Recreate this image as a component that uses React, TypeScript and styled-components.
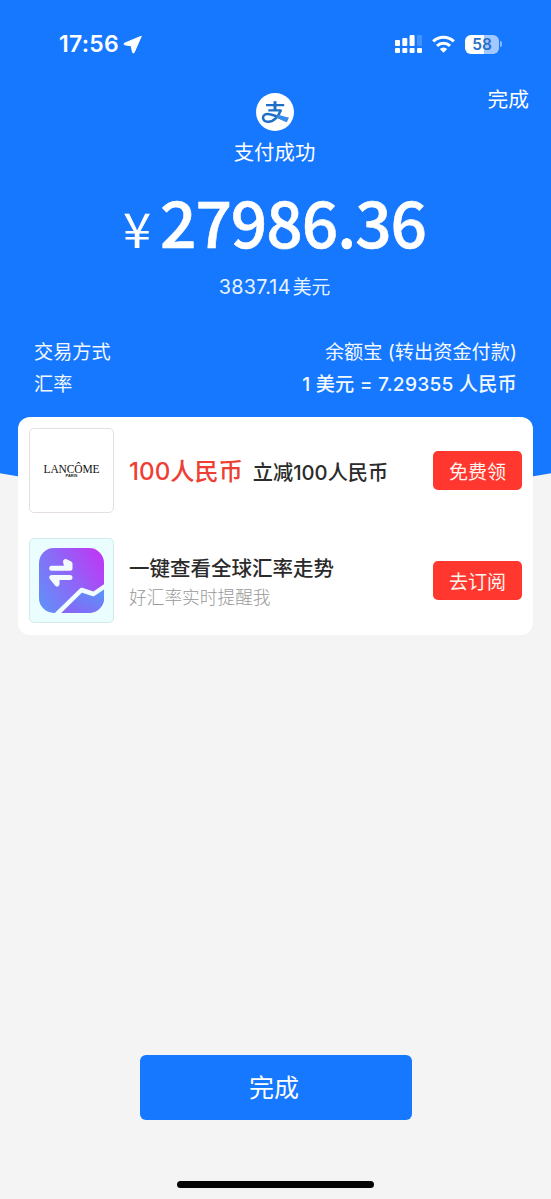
import React from 'react';
import styled, { createGlobalStyle } from 'styled-components';

const BLUE = '#1677ff';

const GlobalStyle = createGlobalStyle`
  * { box-sizing: border-box; }
  body {
    margin: 0;
    background: #f4f4f4;
    font-family: Inter, 'Noto Sans CJK SC', sans-serif;
  }
`;

const Page = styled.main`
  position: relative;
  display: flex;
  flex-direction: column;
  width: 551px;
  height: 1199px;
  overflow: hidden;
  background: #f4f4f4;

  &::before {
    content: '';
    position: absolute;
    top: 0;
    left: -30%;
    width: 160%;
    height: 495px;
    border-radius: 0 0 50% 50% / 0 0 99px 99px;
    background: ${BLUE};
  }

  > * { position: relative; }
`;

const StatusBar = styled.div`
  display: flex;
  align-items: center;
  justify-content: space-between;
  height: 88px;
  padding: 0 49px 0 59px;
  color: #fff;
`;

const Clock = styled.div`
  display: flex;
  align-items: center;
  gap: 4px;
  font-size: 23px;
  font-weight: 600;
  letter-spacing: 0.25px;
`;

const StatusIcons = styled.div`
  display: flex;
  align-items: center;
`;

const Battery = styled.div`
  display: flex;
  align-items: center;
  gap: 1px;
  margin-left: 10px;

  &::after {
    content: '';
    width: 2px;
    height: 6px;
    border-radius: 0 2px 2px 0;
    background: #8abbff;
  }
`;

const BatteryLevel = styled.div`
  width: 34px;
  height: 19px;
  border-radius: 6px;
  background: linear-gradient(90deg, #fff 57%, #a2c8ff 57%);
  color: #2870c8;
  font-size: 15.5px;
  font-weight: 600;
  line-height: 19px;
  text-align: center;
`;

const Summary = styled.header`
  display: grid;
  grid-template-columns: 1fr auto 1fr;
  height: 80px;
  padding: 0 22px;
  color: #fff;
`;

const DoneLink = styled.a`
  justify-self: end;
  margin-top: -3px;
  font-size: 20.7px;
  line-height: 30px;
`;

const Result = styled.div`
  grid-column: 2;
  display: flex;
  flex-direction: column;
  align-items: center;
  margin-left: -2px;
  padding-top: 5px;
  font-size: 20.4px;
  line-height: 30px;

  svg { margin-bottom: 7px; }
`;

const Amount = styled.div`
  display: flex;
  align-items: baseline;
  height: 107px;
  padding-left: 123px;
  color: #fff;
  font-family: 'Noto Sans CJK SC', sans-serif;
  white-space: nowrap;
`;

const Currency = styled.span`
  width: 37px;
  font-size: 48px;
  line-height: 104px;
  transform: scaleX(1.06);
  transform-origin: left;
`;

const Figure = styled.span`
  font-size: 64px;
  font-weight: 500;
  letter-spacing: -1.05px;
  line-height: 104px;
  -webkit-text-stroke: 0.6px #fff;
`;

const Foreign = styled.div`
  display: flex;
  justify-content: center;
  align-items: baseline;
  gap: 2px;
  height: 61px;
  padding-right: 2px;
  color: #e6f4ff;
  font-size: 18.8px;
  line-height: 24px;

  span:first-child { font-size: 19.8px; letter-spacing: 0.25px; }
`;

const Details = styled.dl`
  height: 81px;
  margin: 0;
  padding: 0 34px;
  color: #f2f9ff;
  font-size: 19.2px;
`;

const Detail = styled.div<{ $strong?: boolean }>`
  display: flex;
  justify-content: space-between;
  height: 32px;
  line-height: 32px;

  dt, dd { margin: 0; white-space: nowrap; }
  dd { font-weight: ${(p) => (p.$strong ? 500 : 400)}; letter-spacing: ${(p) => (p.$strong ? '0.2px' : '0')}; }
`;

const Offers = styled.section`
  display: flex;
  flex-direction: column;
  gap: 25px;
  height: 218px;
  margin: 0 18px;
  padding: 11px 11px 0;
  border-radius: 12px;
  background: #fff;
`;

const Offer = styled.article`
  display: flex;
  align-items: center;
  height: 85px;
`;

const Thumb = styled.div<{ $tint?: boolean }>`
  display: flex;
  flex-direction: column;
  align-items: center;
  justify-content: center;
  width: 85px;
  height: 85px;
  margin-right: 15px;
  border: 1px solid ${(p) => (p.$tint ? '#d3e9ea' : '#e6dfe2')};
  border-radius: 5px;
  background: ${(p) => (p.$tint ? '#eafdff' : '#fff')};
`;

const Brand = styled.div`
  padding-top: 2px;
  color: #111;
  font-family: 'Liberation Serif', serif;
  font-size: 11.5px;
  letter-spacing: -0.12px;
  line-height: 9px;
`;

const BrandCity = styled.div`
  color: #222;
  font-family: 'Liberation Sans', sans-serif;
  font-size: 4px;
  font-weight: 700;
  line-height: 4px;
`;

const OfferText = styled.div`
  flex: 1;
  color: #2b2b2b;
  white-space: nowrap;
`;

const Discount = styled.span`
  margin-right: 10px;
  color: #ee3f35;
  font-size: 24.2px;
  font-weight: 500;
`;

const Title = styled.span<{ $compact?: boolean }>`
  font-size: ${(p) => (p.$compact ? '20.2px' : '20.5px')};
  font-weight: 500;
`;

const PromoLine = styled.div`
  margin-top: -3px;
`;

const Caption = styled.div`
  color: #999;
  font-size: 17.7px;
  font-weight: 300;
  line-height: 26px;
`;

const TitleLine = styled.div`
  padding-top: 3px;
  line-height: 29px;
`;

const OfferButton = styled.button`
  width: 89px;
  height: 39px;
  padding: 0;
  border: 0;
  border-radius: 5px;
  background: #ff372f;
  color: #fff3ed;
  font-family: 'Noto Sans CJK SC', sans-serif;
  font-size: 19px;
  line-height: 39px;
`;

const DoneButton = styled.button`
  width: 272px;
  height: 65px;
  margin: auto auto 61px;
  padding: 0 3px 4px 0;
  border: 0;
  border-radius: 6px;
  background: ${BLUE};
  color: #fff;
  font-family: 'Noto Sans CJK SC', sans-serif;
  font-size: 25px;
`;

const HomeIndicator = styled.div`
  width: 197px;
  height: 7px;
  margin: 0 auto 11px;
  border-radius: 4px;
  background: #050505;
`;

const LocationIcon = () => (
  <svg width="20" height="19" viewBox="0 0 20 19" fill="#fff" stroke="#fff" strokeWidth="1" strokeLinejoin="round">
    <path d="M18.3 1.2 1.500 8.200c-.8.400-.7 1.400.2 1.600l6.500 1 1.300 6.500c.2.900 1.300 1 1.700.1z" />
  </svg>
);

const SignalIcon = () => (
  <svg width="28" height="18" viewBox="0 0 28 18" fill="#fff">
    <rect x="0" y="5" width="5" height="6" rx="1" />
    <rect x="7.3" y="3" width="5" height="8" rx="1" />
    <rect x="14.6" y="0" width="5" height="11" rx="1" />
    <rect x="22" y="0" width="5" height="11" rx="1" opacity=".2" />
    <rect x="0" y="13" width="5" height="5" rx="1" />
    <rect x="7.3" y="13" width="5" height="5" rx="1" />
    <rect x="14.6" y="13" width="5" height="5" rx="1" />
    <rect x="22" y="13" width="5" height="5" rx="1" />
  </svg>
);

const WifiMark = styled.svg`
  margin-left: 9px;
`;

const WifiIcon = () => (
  <WifiMark width="23" height="18" viewBox="0 0 23 18" fill="none" stroke="#fff" strokeWidth="3.1">
    <path d="M1.2 6.4a14.8 14.8 0 0 1 20.6 0" />
    <path d="M5 10.9a9.4 9.4 0 0 1 13 0" />
    <path d="M11.5 17.8 7.8 14a5.2 5.2 0 0 1 7.4 0z" fill="#fff" stroke="none" />
  </WifiMark>
);

const PayLogo = () => (
  <svg width="38" height="38" viewBox="0 0 38 38" fill="none">
    <circle cx="19" cy="19" r="19" fill="#fff" />
    <g stroke="#1e70c4">
      <path d="M10 12.1h18.2M12.3 17.3h13.2" strokeWidth="2.2" />
      <path d="M19 8.2v9" strokeWidth="3" />
      <path d="M24.8 17c-2 6.2-6.8 11.8-12.4 11.8-3 0-5.4-1.7-5.4-4s2.1-3.7 4.7-3.7c5.2 0 10.3 3.5 18.3 5.7" strokeWidth="2.5" />
    </g>
    <path d="M20 24.3c4 2 7 3.8 10.8 5l2.2-4.7c-3.9-.6-7.2-1.7-10.7-2.8z" fill="#398be6" />
  </svg>
);

const RateIcon = () => (
  <svg width="65" height="65" viewBox="0 0 65 65" fill="none">
    <defs>
      <linearGradient id="sky" x1="0" y1=".8" x2="1" y2=".2">
        <stop offset="0" stopColor="#648df8" />
        <stop offset=".45" stopColor="#896bf7" />
        <stop offset="1" stopColor="#bd39f5" />
      </linearGradient>
      <linearGradient id="ground" x1=".2" y1="1" x2="1" y2="0">
        <stop offset="0" stopColor="#8b62f6" />
        <stop offset="1" stopColor="#529bf8" />
      </linearGradient>
      <clipPath id="tile"><rect width="65" height="65" rx="15" /></clipPath>
    </defs>
    <g clipPath="url(#tile)">
      <rect width="65" height="65" fill="url(#sky)" />
      <path d="M18 66 42 42l12 4 12-8v28z" fill="url(#ground)" />
      <path d="M17 67 42.500 42l12 4L67 37.500" stroke="#f0fdff" strokeWidth="4.500" strokeLinejoin="round" />
    </g>
    <g fill="#f3fbff" stroke="#f3fbff" strokeWidth="5" strokeLinecap="round" strokeLinejoin="round">
      <path d="M12.7 20.2H31v-4.500l-4.500-2.200 1.500 6.700z" />
      <path d="M31 29.500H12.700l5.300 6.500v-6.500z" />
    </g>
  </svg>
);

export default function App() {
  return (
    <>
      <GlobalStyle />
      <Page>
        <StatusBar>
          <Clock>17:56<LocationIcon /></Clock>
          <StatusIcons>
            <SignalIcon />
            <WifiIcon />
            <Battery><BatteryLevel>58</BatteryLevel></Battery>
          </StatusIcons>
        </StatusBar>

        <Summary>
          <Result><PayLogo />支付成功</Result>
          <DoneLink>完成</DoneLink>
        </Summary>

        <Amount><Currency>¥</Currency><Figure>27986.36</Figure></Amount>
        <Foreign><span>3837.14</span><span>美元</span></Foreign>

        <Details>
          <Detail><dt>交易方式</dt><dd>余额宝 (转出资金付款)</dd></Detail>
          <Detail $strong><dt>汇率</dt><dd>1 美元 = 7.29355 人民币</dd></Detail>
        </Details>

        <Offers>
          <Offer>
            <Thumb><Brand>LANCÔME</Brand><BrandCity>PARIS</BrandCity></Thumb>
            <OfferText>
              <PromoLine><Discount>100人民币</Discount><Title $compact>立减100人民币</Title></PromoLine>
            </OfferText>
            <OfferButton>免费领</OfferButton>
          </Offer>
          <Offer>
            <Thumb $tint><RateIcon /></Thumb>
            <OfferText>
              <TitleLine><Title>一键查看全球汇率走势</Title></TitleLine>
              <Caption>好汇率实时提醒我</Caption>
            </OfferText>
            <OfferButton>去订阅</OfferButton>
          </Offer>
        </Offers>

        <DoneButton>完成</DoneButton>
        <HomeIndicator />
      </Page>
    </>
  );
}
